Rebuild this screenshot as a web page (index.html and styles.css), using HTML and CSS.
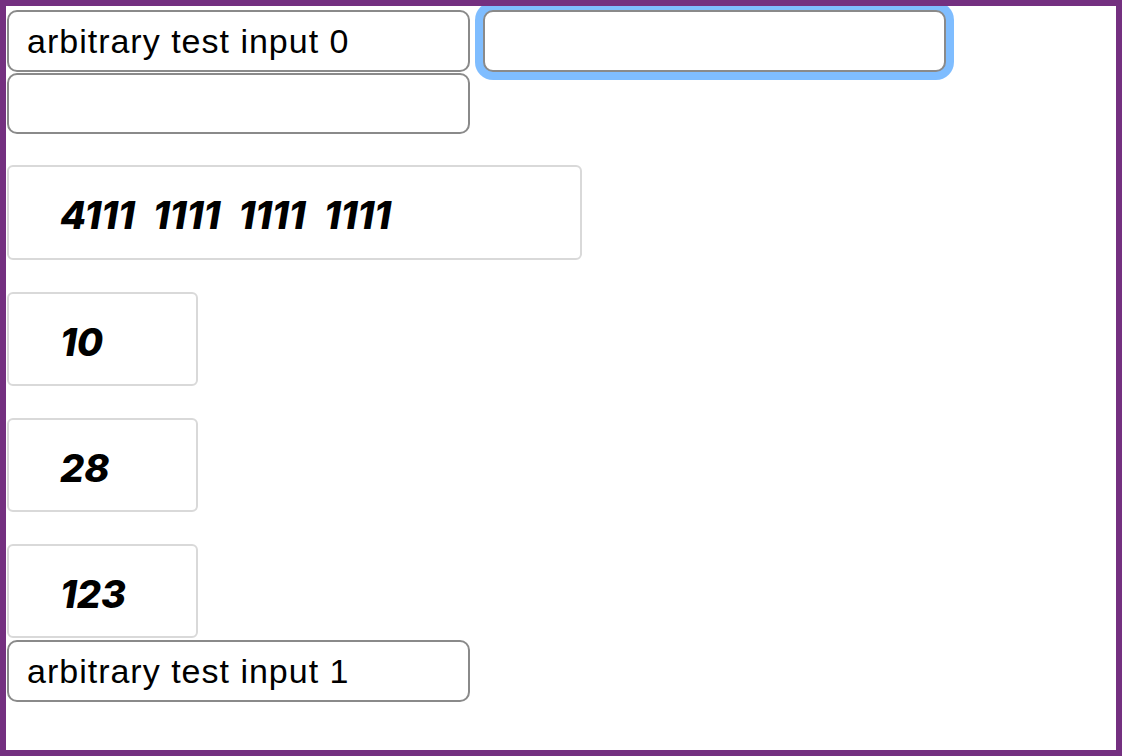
FILE: index.html
```html
<!DOCTYPE html>
<html lang="en">
<head>
<meta charset="utf-8">
<title>Inputs</title>
<link rel="stylesheet" href="styles.css">
</head>
<body>
<div class="page">
  <div class="row">
    <input class="field" type="text" value="arbitrary test input 0">
    <input class="field focused" type="text" value="">
  </div>
  <input class="field field-second" type="text" value="">
  <div class="card card-number">4111 1111 1111 1111</div>
  <div class="card card-short">10</div>
  <div class="card card-short">28</div>
  <div class="card card-short">123</div>
  <input class="field field-last" type="text" value="arbitrary test input 1">
</div>
</body>
</html>
```

FILE: styles.css
```css
html, body {
  margin: 0;
  height: 100%;
}

body {
  box-sizing: border-box;
  border: 6px solid #743080;
  background: #ffffff;
  padding: 4px 0 0 1px;
  font-family: "Liberation Sans", Arial, sans-serif;
}

.page {
  display: flex;
  flex-direction: column;
  align-items: flex-start;
}

.row {
  display: flex;
  gap: 13px;
}

.field {
  box-sizing: border-box;
  width: 463px;
  height: 62px;
  margin: 0;
  border: 2px solid #8a8a8a;
  border-radius: 10px;
  padding: 0 0 0 18px;
  font-family: "Liberation Sans", Arial, sans-serif;
  font-size: 34px;
  letter-spacing: 1px;
  color: #000000;
  background: #ffffff;
  outline: none;
}

.field.focused {
  box-shadow: 0 0 0 8px rgba(0, 123, 255, 0.5);
}

.field-second {
  margin-top: 1px;
  height: 61px;
}

.field-last {
  margin-top: 2px;
}

.card {
  box-sizing: border-box;
  border: 2px solid #d9d9d9;
  border-radius: 6px;
  display: flex;
  align-items: center;
  padding: 5px 0 0 51px;
  font-family: Inter, Roboto, "Liberation Sans", sans-serif;
  font-style: italic;
  font-weight: 800;
  font-size: 38px;
  word-spacing: 10px;
  color: #000000;
}

.card-number {
  width: 575px;
  height: 95px;
  margin-top: 31px;
}

.card-short {
  width: 191px;
  height: 94px;
  margin-top: 32px;
}
```
